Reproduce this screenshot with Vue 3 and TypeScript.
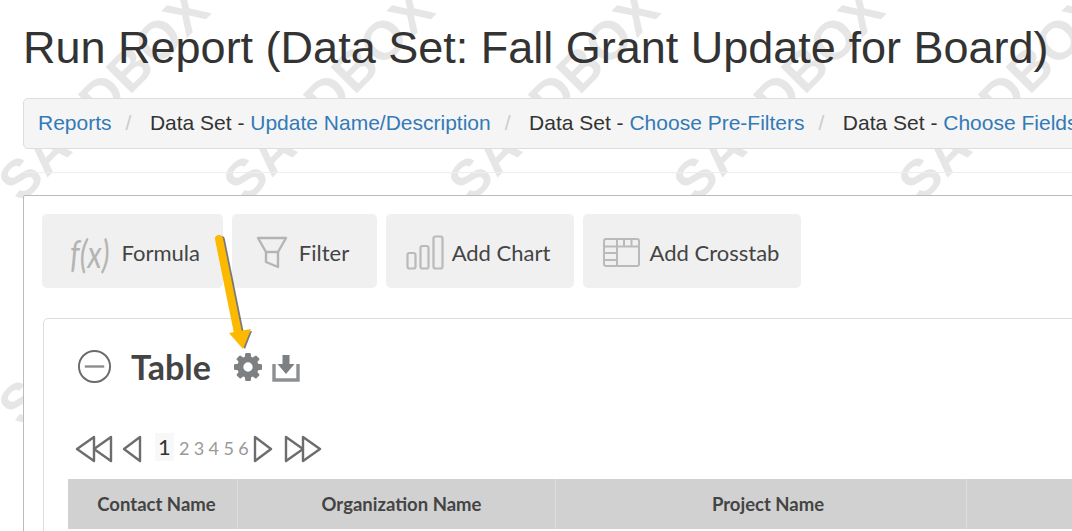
<template>
  <div class="page">
    <div class="watermarks">
      <span
        v-for="m in marks"
        :key="m.id"
        class="mark"
        :style="{ left: m.x + 'px', top: m.y + 'px' }"
      >SANDBOX</span>
    </div>

    <div class="content">
      <h1>Run Report (Data Set: Fall Grant Update for Board)</h1>

      <div class="crumbs">
        <template v-for="(c, i) in crumbs" :key="c.link">
          <span v-if="i > 0" class="sep">/</span>
          <span class="crumb"><template v-if="c.prefix">{{ c.prefix }} - </template><a>{{ c.link }}</a></span>
        </template>
      </div>

      <hr />

      <div class="card">
        <div class="tools">
          <button class="tool formula">
            <span class="fx">f(x)</span>
            Formula
          </button>
          <button class="tool filter">
            <svg width="32" height="33" viewBox="0 0 32 33" fill="none" stroke="#b4b4b4" stroke-width="2.4" stroke-linejoin="round">
              <path d="M2 2 H30 L22 16 V31 L10 26 V16 Z" />
              <path d="M10 16 H22" />
            </svg>
            Filter
          </button>
          <button class="tool chart">
            <svg width="38" height="35" viewBox="0 0 38 35" fill="none" stroke="#bababa" stroke-width="2.2">
              <rect x="1.5" y="18" width="8" height="15.5" rx="2" />
              <rect x="14.5" y="11" width="8" height="22.5" rx="2" />
              <rect x="27.5" y="1.5" width="9" height="32" rx="2" />
            </svg>
            Add Chart
          </button>
          <button class="tool cross">
            <svg width="37" height="29" viewBox="0 0 37 29" fill="none" stroke="#bababa" stroke-width="2">
              <rect x="1" y="1" width="35" height="27" rx="2" />
              <path d="M1 8.5 H36 M14 1 V28 M1 15 H14 M1 22 H14 M21 1 V8.5 M28.5 1 V8.5" />
            </svg>
            Add Crosstab
          </button>
        </div>

        <div class="panel">
          <div class="panel-head">
            <svg class="collapse" width="35" height="35" viewBox="0 0 36 36" fill="none" stroke="#6b6b6b">
              <circle cx="18" cy="18" r="16" stroke-width="2" />
              <path d="M8 18 H28" stroke-width="2.4" stroke="#8a8a8a" />
            </svg>
            <span class="panel-title">Table</span>
            <svg class="gear" width="28" height="28" viewBox="128 128 1536 1536" fill="#7d8083">
              <path d="M1152 896q0-106-75-181t-181-75-181 75-75 181 75 181 181 75 181-75 75-181zm512-109v222q0 12-8 23t-20 13l-185 28q-19 54-39 91 35 50 107 138 10 12 10 25t-9 23q-27 37-99 108t-94 71q-12 0-26-9l-138-108q-44 23-91 38-16 136-29 186-7 28-36 28h-222q-14 0-24.5-8.5t-11.5-21.5l-28-184q-49-16-90-37l-141 107q-10 9-25 9-14 0-25-11-126-114-165-168-7-10-7-23 0-12 8-23 15-21 51-66.5t54-70.5q-27-50-41-99l-183-27q-13-2-21-12.5t-8-23.5v-222q0-12 8-23t19-13l186-28q14-46 39-92-40-57-107-138-10-12-10-24 0-10 9-23 26-36 98.5-107.5t94.5-71.5q13 0 26 10l138 107q44-23 91-38 16-136 29-186 7-28 36-28h222q14 0 24.5 8.5t11.5 21.5l28 184q49 16 90 37l142-107q9-9 24-9 13 0 25 10 129 119 165 170 7 8 7 22 0 12-8 23-15 21-51 66.5t-54 70.5q26 50 41 98l183 28q13 2 21 12.5t8 23.5z" />
            </svg>
            <svg class="download" width="28" height="28" viewBox="0 0 28 28" fill="none">
              <path d="M2 10 V26 H26 V10" stroke="#8d9092" stroke-width="3.4" />
              <path d="M10.5 1 H17.5 V10 H22.5 L14 20 L5.5 10 H10.5 Z" fill="#7d8083" />
            </svg>
          </div>

          <div class="pager">
            <svg width="38" height="28" viewBox="0 0 38 28" fill="none" stroke="#6d6d6d" stroke-width="2.4" stroke-linejoin="round">
              <path d="M19 2 L2 14 L19 26 Z" />
              <path d="M36 2 L19 14 L36 26 Z" />
            </svg>
            <svg class="one" width="20" height="28" viewBox="0 0 20 28" fill="none" stroke="#6d6d6d" stroke-width="2.4" stroke-linejoin="round">
              <path d="M18 2 L2 14 L18 26 Z" />
            </svg>
            <span
              v-for="n in pages"
              :key="n"
              class="page-num"
              :class="{ active: n === 1 }"
            >{{ n }}</span>
            <svg class="next" width="20" height="28" viewBox="0 0 20 28" fill="none" stroke="#6d6d6d" stroke-width="2.4" stroke-linejoin="round">
              <path d="M2 2 L18 14 L2 26 Z" />
            </svg>
            <svg class="last" width="38" height="28" viewBox="0 0 38 28" fill="none" stroke="#6d6d6d" stroke-width="2.4" stroke-linejoin="round">
              <path d="M2 2 L19 14 L2 26 Z" />
              <path d="M19 2 L36 14 L19 26 Z" />
            </svg>
          </div>

          <div class="table-head">
            <div class="th contact">Contact Name</div>
            <div class="th org">Organization Name</div>
            <div class="th project">Project Name</div>
            <div class="th rest"></div>
          </div>
        </div>
      </div>
    </div>

    <!-- annotation arrow pasted over the screenshot -->
    <svg class="pointer" width="70" height="130" viewBox="0 0 70 130">
      <g transform="translate(2 1)" fill="#222" stroke="#222" fill-opacity="0.6" stroke-opacity="0.6">
        <path d="M12 6 L31 100" stroke-width="8" stroke-linecap="round" />
        <path d="M23 100 L43 97 L36 115 Z" stroke="none" />
      </g>
      <path d="M12 6 L31 100" stroke="#fcb900" stroke-width="8" stroke-linecap="round" />
      <path d="M22 100 L44 96 L36 116 Z" fill="#fcb900" />
    </svg>
  </div>
</template>

<script setup lang="ts">
interface Crumb {
  prefix: string;
  link: string;
}

const crumbs: Crumb[] = [
  { prefix: "", link: "Reports" },
  { prefix: "Data Set", link: "Update Name/Description" },
  { prefix: "Data Set", link: "Choose Pre-Filters" },
  { prefix: "Data Set", link: "Choose Fields" },
];

const pages = [1, 2, 3, 4, 5, 6];

// background watermark, one tile every 225px
const marks: { id: number; x: number; y: number }[] = [];
for (let row = 0; row < 3; row++) {
  for (let col = 0; col < 6; col++) {
    marks.push({ id: row * 10 + col, x: col * 225 - 47, y: row * 224 + 65 });
  }
}
</script>

<style>
html,
body {
  margin: 0;
  background: #fff;
  overflow: hidden;
}
</style>

<style scoped>
.page {
  position: relative;
  width: 1072px;
  height: 531px;
  overflow: hidden;
  font-family: "Liberation Sans", Arial, sans-serif;
  color: #333;
}

.watermarks {
  position: absolute;
  inset: 0;
}

.mark {
  position: absolute;
  width: 300px;
  font-size: 54px;
  font-weight: 700;
  line-height: 60px;
  text-align: center;
  color: #e6e6e6;
  transform: rotate(-45deg);
  white-space: nowrap;
}

.content {
  position: relative;
  padding-left: 23px;
  width: 1400px;
}

h1 {
  margin: 0;
  padding-top: 23px;
  font-size: 45px;
  line-height: 50px;
  font-weight: 400;
}

.crumbs {
  display: flex;
  align-items: center;
  margin-top: 25px;
  height: 47px;
  padding-left: 14px;
  padding-bottom: 2px;
  background: #f5f5f5;
  border: 1px solid #ddd;
  border-radius: 5px;
  font-size: 21px;
  white-space: nowrap;
}

.crumbs a {
  color: #337ab7;
}

.sep {
  color: #ccc;
  padding: 0 18.5px 0 14px;
}

hr {
  margin: 23px 0 22px;
  border: 0;
  border-top: 1px solid #eee;
}

.card {
  background: #fff;
  border: 1px solid #bbb;
  border-radius: 2px;
  padding: 18px 18px 0 18px;
  height: 400px;
  font-family: Lato, sans-serif;
}

.tools {
  display: flex;
  gap: 9px;
}

.tool {
  display: flex;
  align-items: center;
  justify-content: center;
  height: 74px;
  padding: 3px 0 0;
  border: 0;
  border-radius: 5px;
  background: #f0f0f0;
  color: #444;
  font-family: inherit;
  font-size: 22px;
}

.formula {
  width: 181px;
  gap: 11px;
  padding-left: 3px;
}

.filter {
  width: 145px;
  gap: 11px;
  padding-right: 4px;
}

.chart {
  width: 188px;
  gap: 8px;
  padding-right: 4px;
}

.cross {
  width: 218px;
  gap: 10px;
  padding-right: 2px;
}

.fx {
  display: inline-block;
  margin: 0 -3.5px;
  font-style: italic;
  font-weight: 400;
  font-size: 38px;
  color: #b4b4b4;
  transform: scaleX(0.8);
}

.panel {
  margin-top: 30px;
  margin-left: 1px;
  padding-left: 24px;
  border: 1px solid #ddd;
  border-radius: 5px;
  height: 300px;
}

.panel-head {
  display: flex;
  align-items: center;
  height: 94px;
  padding-bottom: 2px;
  padding-left: 9px;
}

.panel-title {
  margin-left: 19px;
  font-size: 34px;
  font-weight: 700;
  color: #444;
}

.gear {
  margin-left: 23px;
  margin-top: 2px;
}

.download {
  margin-left: 10px;
  margin-top: 4px;
}

.pager {
  display: flex;
  align-items: center;
  height: 36px;
  margin-top: 16px;
  padding-left: 7px;
}

.one {
  margin-left: 9px;
}

.next {
  margin-left: 2px;
}

.last {
  margin-left: 11px;
}

.page-num {
  margin-bottom: 3px;
  padding: 0 2.2px;
  font-size: 18px;
  color: #999;
}

.page-num.active {
  margin: 0 3px 5px 13px;
  padding: 3px;
  font-size: 22px;
  line-height: 22px;
  color: #333;
  background: #f8f8f8;
}

.table-head {
  display: flex;
  margin-top: 12px;
  height: 50px;
  background: #d1d1d1;
}

.th {
  display: flex;
  align-items: center;
  justify-content: center;
  flex: none;
  border-right: 1px solid #ddd;
  box-sizing: border-box;
  font-size: 18.5px;
  font-weight: 700;
  color: #444;
}

.contact {
  width: 170px;
  padding-left: 8px;
}

.org {
  width: 318px;
  padding-left: 10px;
}

.project {
  width: 411px;
  padding-left: 14px;
}

.rest {
  width: 300px;
}

.pointer {
  position: absolute;
  left: 207px;
  top: 233px;
}
</style>
